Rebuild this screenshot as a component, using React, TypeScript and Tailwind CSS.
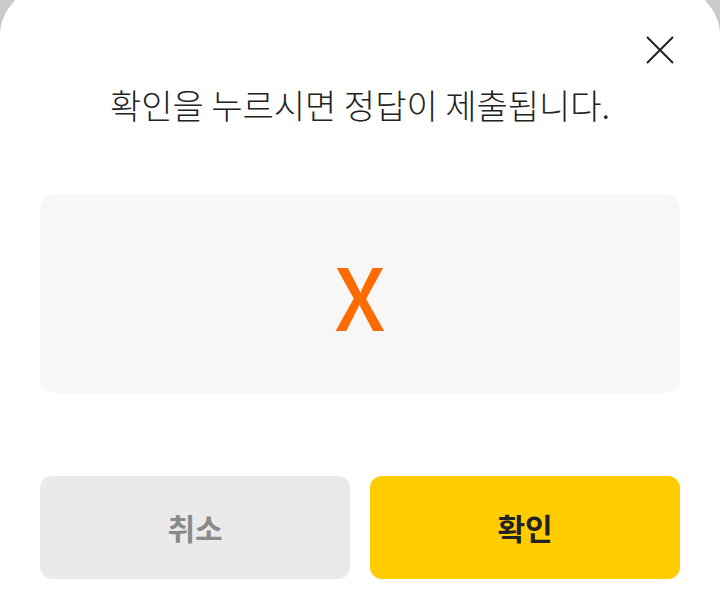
export default function App() {
  return (
    <div
      className="h-[616px] w-[720px] overflow-hidden bg-[#cbcbcb]"
      style={{ fontFamily: '"Noto Sans CJK KR", "Noto Sans", sans-serif' }}
    >
      <div className="relative mt-[-14px] h-[640px] rounded-t-[50px] bg-white px-10 pt-[95px]">
        <button className="absolute left-[645px] top-[49px] text-[#222]" aria-label="닫기">
          <svg width="30" height="30" viewBox="0 0 30 30" fill="none" stroke="currentColor" strokeWidth="2">
            <path d="M2 2 28 28M28 2 2 28" />
          </svg>
        </button>

        <h2 className="text-center text-[34px] font-light leading-[48px] text-[#222]">
          확인을 누르시면 정답이 제출됩니다.
        </h2>

        <div className="mt-[65px] flex h-[199px] items-center justify-center rounded-2xl bg-[#f7f7f7]">
          <span className="text-[86px] font-medium leading-none text-[#ff6b00]">X</span>
        </div>

        <div className="mt-[83px] grid grid-cols-2 gap-5">
          <button className="h-[103px] rounded-xl bg-[#eaeaea] text-[30px] font-bold text-[#8a8a8a]">
            취소
          </button>
          <button className="h-[103px] rounded-xl bg-[#ffcc00] text-[30px] font-bold text-[#222]">
            확인
          </button>
        </div>
      </div>
    </div>
  );
}
